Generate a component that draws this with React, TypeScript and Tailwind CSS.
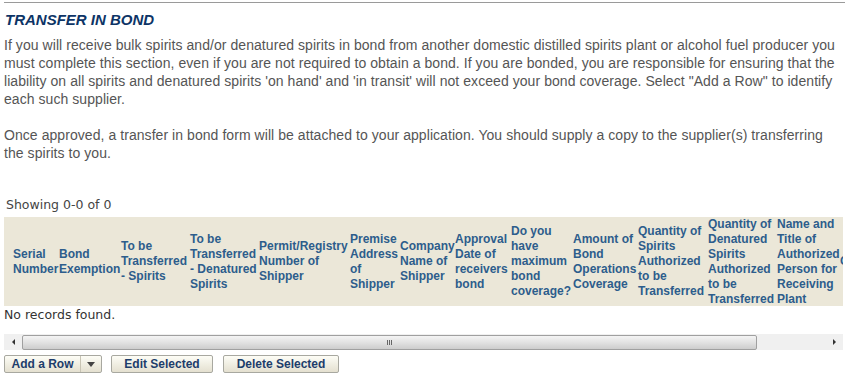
import React from "react";

const columns: { lines: string[]; width: number }[] = [
  { lines: ["Serial", "Number"], width: 46 },
  { lines: ["Bond", "Exemption"], width: 62 },
  { lines: ["To be", "Transferred", "- Spirits"], width: 69 },
  { lines: ["To be", "Transferred", "- Denatured", "Spirits"], width: 69 },
  { lines: ["Permit/Registry", "Number of", "Shipper"], width: 91 },
  { lines: ["Premise", "Address", "of", "Shipper"], width: 50 },
  { lines: ["Company", "Name of", "Shipper"], width: 55 },
  { lines: ["Approval", "Date of", "receivers", "bond"], width: 56 },
  { lines: ["Do you", "have", "maximum", "bond", "coverage?"], width: 62 },
  { lines: ["Amount of", "Bond", "Operations", "Coverage"], width: 65 },
  { lines: ["Quantity of", "Spirits", "Authorized", "to be", "Transferred"], width: 70 },
  { lines: ["Quantity of", "Denatured", "Spirits", "Authorized", "to be", "Transferred"], width: 69 },
  { lines: ["Name and", "Title of", "Authorized", "Person for", "Receiving", "Plant"], width: 63 },
  { lines: ["Comments"], width: 80 },
];

const btn =
  "h-[18px] border border-[#a8a8a0] rounded-[2px] bg-gradient-to-b from-[#fdfdf6] to-[#e4e0d0] text-[12px] font-bold text-[#1d3d6b] flex items-center justify-center";

export default function App() {
  return (
    <div className="w-[849px] h-[392px] bg-white overflow-hidden font-['Liberation_Sans',Arial,sans-serif]">
      <div className="ml-[4px] mr-[4px] mt-[2px] border-t border-[#9a9a9a]" />
      <h2 className="ml-[5px] mt-[8px] text-[15px] leading-[18px] font-bold italic text-[#0d3466]">
        TRANSFER IN BOND
      </h2>
      <div className="ml-[4px] mr-[4px] mt-[7px] text-[14px] leading-[18px] tracking-[0.06px] text-[#555555]">
        <p>
          If you will receive bulk spirits and/or denatured spirits in bond from another domestic distilled spirits plant or alcohol fuel producer you must complete this section, even if you are not required to obtain a bond. If you are bonded, you are responsible for ensuring that the liability on all spirits and denatured spirits 'on hand' and 'in transit' will not exceed your bond coverage. Select "Add a Row" to identify each such supplier.
        </p>
        <p className="mt-[18px]">
          Once approved, a transfer in bond form will be attached to your application. You should supply a copy to the supplier(s) transferring the spirits to you.
        </p>
      </div>

      <div className="ml-[6px] mt-[35px] text-[12.5px] leading-[15px] text-[#444444] font-['DejaVu_Sans',Verdana,sans-serif]">
        Showing 0-0 of 0
      </div>

      <div className="ml-[4px] mr-[6px] mt-[5px] h-[89px] bg-[#ebe7d8] overflow-hidden">
        <div className="flex h-full items-center pl-[9px]">
          {columns.map((c, i) => (
            <div
              key={i}
              className="shrink-0 text-[12px] leading-[15px] font-bold text-[#2d5d8c] whitespace-nowrap"
              style={{ width: c.width }}
            >
              {c.lines.map((l, j) => (
                <div key={j}>{l}</div>
              ))}
            </div>
          ))}
        </div>
      </div>

      <div className="ml-[4px] mt-[1px] text-[12.5px] leading-[15px] text-[#333333] font-['DejaVu_Sans',Verdana,sans-serif]">
        No records found.
      </div>

      <div className="ml-[4px] mr-[6px] mt-[12px] h-[16px] bg-[#f0f0f0] flex items-center">
        <div className="w-[18px] flex items-center justify-center">
          <div className="w-0 h-0 border-y-[3px] border-y-transparent border-r-[3px] border-r-[#333]" />
        </div>
        <div className="w-[735px] h-[15px] border border-[#a0a0a0] rounded-[2px] bg-gradient-to-b from-[#f4f4f4] via-[#e2e2e2] to-[#cdcdcd] flex items-center justify-center gap-[1px]">
          <span className="w-[1px] h-[5px] bg-[#666]" />
          <span className="w-[1px] h-[5px] bg-[#666]" />
          <span className="w-[1px] h-[5px] bg-[#666]" />
        </div>
        <div className="flex-1" />
        <div className="w-[18px] flex items-center justify-center">
          <div className="w-0 h-0 border-y-[3px] border-y-transparent border-l-[3px] border-l-[#333]" />
        </div>
      </div>

      <div className="ml-[4px] mt-[5px] flex items-center">
        <div className={btn + " w-[98px] justify-start"}>
          <span className="w-[75px] text-center">Add a Row</span>
          <span className="h-full border-l border-[#c8c4b4]" />
          <span className="flex-1 flex justify-center">
            <span className="w-0 h-0 border-x-[4px] border-x-transparent border-t-[5px] border-t-[#444]" />
          </span>
        </div>
        <div className={btn + " w-[102px] ml-[9px]"}>Edit Selected</div>
        <div className={btn + " w-[116px] ml-[10px]"}>Delete Selected</div>
      </div>
    </div>
  );
}
